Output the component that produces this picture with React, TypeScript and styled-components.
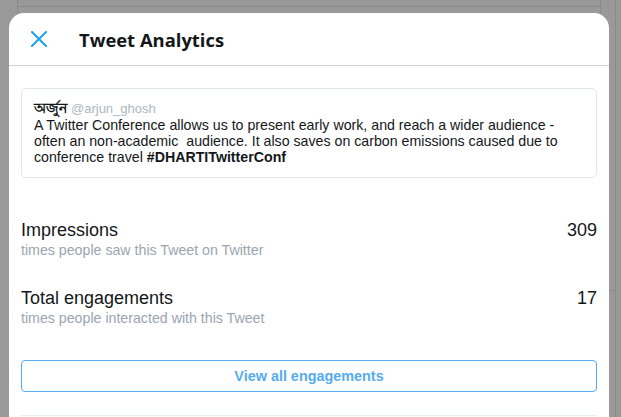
import styled, { createGlobalStyle } from "styled-components";

const GlobalStyle = createGlobalStyle`
  html, body {
    margin: 0;
    padding: 0;
  }
  body {
    font-family: "Liberation Sans", Arial, sans-serif;
    background: #ffffff;
    overflow: hidden;
  }
`;

/* dimmed page behind the dialog */
const Page = styled.div`
  display: grid;
  grid-template-columns: 17px 583px 16px 1fr;
  height: 417px;
`;

const Main = styled.div`
  border-left: 1px solid #e6e6e6;
`;

const TopStrip = styled.div`
  height: 6px;
  border-bottom: 1px solid #e6e6e6;
`;

const SideColumn = styled.div`
  box-sizing: border-box;
  border-left: 1px solid #e6e6e6;
  border-right: 1px solid #e6e6e6;
`;

const SideCell = styled.div`
  height: 290px;
  border-bottom: 1px solid #e6e6e6;
`;

const Overlay = styled.div`
  position: fixed;
  inset: 0;
  background: rgba(0, 0, 0, 0.4);
  padding: 13px 12px 0 9px;
  overflow: hidden;
`;

const Modal = styled.div`
  width: 600px;
  min-height: 420px;
  background: #ffffff;
  border-radius: 15px 15px 0 0;
`;

const Header = styled.header`
  box-sizing: border-box;
  display: flex;
  align-items: center;
  height: 53px;
  padding: 0 22px;
  border-bottom: 1px solid #ccd6dd;
`;

const CloseButton = styled.button`
  display: flex;
  padding: 0;
  border: 0;
  background: none;
  cursor: pointer;
`;

const Title = styled.h2`
  margin: 0 0 0 32px;
  font-family: "Open Sans", "Noto Sans", sans-serif;
  font-size: 18.4px;
  font-weight: 700;
  color: #14171a;
`;

const Body = styled.div`
  padding: 22px 12px 0;
`;

const TweetCard = styled.article`
  border: 1px solid #e1e8ed;
  border-radius: 5px;
  padding: 9px 12px 12px;
  color: #14171a;
`;

const Author = styled.div`
  height: 19px;
  line-height: 19px;
  white-space: nowrap;
`;

const Name = styled.span`
  font-size: 14px;
  font-weight: 700;
`;

const Handle = styled.span`
  margin-left: 4px;
  font-size: 13px;
  color: #aab8c2;
`;

const TweetText = styled.p`
  margin: 0;
  font-size: 14.2px;
  line-height: 16px;
  b {
    font-weight: 700;
  }
`;

const Stats = styled.section`
  margin-top: 27px;
`;

const StatRow = styled.div`
  display: flex;
  justify-content: space-between;
  padding: 14px 0;
`;

const StatLabel = styled.div`
  font-size: 18px;
  line-height: 22px;
  color: #14171a;
`;

const StatHint = styled.div`
  font-size: 14.2px;
  line-height: 18px;
  color: #9aa5b0;
`;

const StatValue = styled.div`
  font-size: 18px;
  line-height: 22px;
  color: #14171a;
`;

const ViewAllButton = styled.button`
  display: block;
  box-sizing: border-box;
  width: 100%;
  height: 32px;
  margin-top: 19px;
  border: 1px solid #55acee;
  border-radius: 4px;
  background: #ffffff;
  color: #55acee;
  font-family: "Liberation Sans", Arial, sans-serif;
  font-size: 14.4px;
  font-weight: 700;
  cursor: pointer;
`;

const Footer = styled.div`
  margin-top: 23px;
  border-top: 1px solid #e6ecf0;
`;

const stats = [
  { label: "Impressions", hint: "times people saw this Tweet on Twitter", value: 309 },
  { label: "Total engagements", hint: "times people interacted with this Tweet", value: 17 },
];

function CloseIcon() {
  return (
    <svg width="16" height="16" viewBox="0 0 16 16" aria-hidden="true">
      <path d="M1 1 L15 15 M15 1 L1 15" stroke="#1da1f2" strokeWidth="2" strokeLinecap="square" fill="none" />
    </svg>
  );
}

export default function App() {
  return (
    <>
      <GlobalStyle />
      <Page>
        <div />
        <Main>
          <TopStrip />
        </Main>
        <SideColumn>
          <SideCell />
        </SideColumn>
        <div />
      </Page>

      <Overlay>
        <Modal role="dialog" aria-label="Tweet Analytics">
          <Header>
            <CloseButton aria-label="Close">
              <CloseIcon />
            </CloseButton>
            <Title>Tweet Analytics</Title>
          </Header>

          <Body>
            <TweetCard>
              <Author>
                <Name>অর্জুন</Name>
                <Handle>@arjun_ghosh</Handle>
              </Author>
              <TweetText>
                A Twitter Conference allows us to present early work, and reach a wider audience - often an
                non-academic{"\u00a0"} audience. It also saves on carbon emissions caused due to conference travel{" "}
                <b>#DHARTITwitterConf</b>
              </TweetText>
            </TweetCard>

            <Stats>
              {stats.map((s) => (
                <StatRow key={s.label}>
                  <div>
                    <StatLabel>{s.label}</StatLabel>
                    <StatHint>{s.hint}</StatHint>
                  </div>
                  <StatValue>{s.value}</StatValue>
                </StatRow>
              ))}
            </Stats>

            <ViewAllButton>View all engagements</ViewAllButton>
            <Footer />
          </Body>
        </Modal>
      </Overlay>
    </>
  );
}
